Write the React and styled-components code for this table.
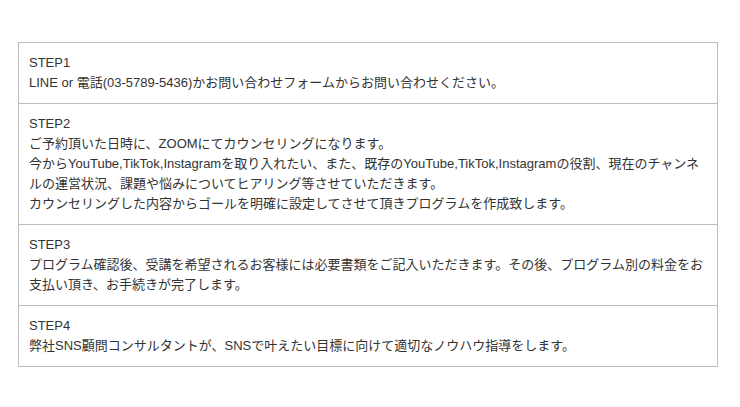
import React from "react";
import styled, { createGlobalStyle } from "styled-components";

const GlobalStyle = createGlobalStyle`
  body {
    margin: 0;
    background: #fff;
    font-family: "Liberation Sans", "Noto Sans CJK JP", sans-serif;
  }
`;

const Page = styled.div`
  padding: 42px 22px 0 18px;
`;

const StepTable = styled.table`
  width: 700px;
  border-collapse: collapse;
  border: 1px solid #bdbdbd;
  font-size: 13px;
  line-height: 20px;
  color: #333;
`;

const StepRow = styled.tr`
  border-bottom: 1px solid #bdbdbd;
`;

const StepCell = styled.td`
  padding: 10px 10px;
  text-align: left;
  vertical-align: top;
`;

const steps = [
  {
    title: "STEP1",
    lines: ["LINE or 電話(03-5789-5436)かお問い合わせフォームからお問い合わせください。"],
  },
  {
    title: "STEP2",
    lines: [
      "ご予約頂いた日時に、ZOOMにてカウンセリングになります。",
      "今からYouTube,TikTok,Instagramを取り入れたい、また、既存のYouTube,TikTok,Instagramの役割、現在のチャンネルの運営状況、課題や悩みについてヒアリング等させていただきます。",
      "カウンセリングした内容からゴールを明確に設定してさせて頂きプログラムを作成致します。",
    ],
  },
  {
    title: "STEP3",
    lines: [
      "プログラム確認後、受講を希望されるお客様には必要書類をご記入いただきます。その後、プログラム別の料金をお支払い頂き、お手続きが完了します。",
    ],
  },
  {
    title: "STEP4",
    lines: ["弊社SNS顧問コンサルタントが、SNSで叶えたい目標に向けて適切なノウハウ指導をします。"],
  },
];

const App = () => (
  <Page>
    <GlobalStyle />
    <StepTable>
      <tbody>
        {steps.map((step) => (
          <StepRow key={step.title}>
            <StepCell>
              {step.title}
              {step.lines.map((line, i) => (
                <React.Fragment key={i}>
                  <br />
                  {line}
                </React.Fragment>
              ))}
            </StepCell>
          </StepRow>
        ))}
      </tbody>
    </StepTable>
  </Page>
);

export default App;
